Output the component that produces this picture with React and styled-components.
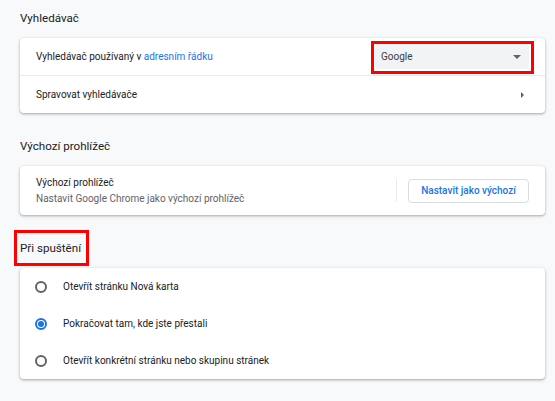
import React from 'react'
import styled, { createGlobalStyle } from 'styled-components'

const Global = createGlobalStyle`
  html, body {
    margin: 0;
    padding: 0;
    background: #f8f9fa;
  }
  body {
    font-family: Roboto, "Liberation Sans", sans-serif;
    color: #202124;
    -webkit-font-smoothing: antialiased;
  }
`

const App = () => {
  return (
    <>
      <Global />
      <S.Page>
        <S.Heading>Vyhledávač</S.Heading>
        <S.Card>
          <S.Row>
            <S.Label>
              Vyhledávač používaný v <S.Link>adresním řádku</S.Link>
            </S.Label>
            <S.Select>
              <span>Google</span>
              <S.DownArrow />
            </S.Select>
          </S.Row>
          <S.Row divided>
            <S.Label>Spravovat vyhledávače</S.Label>
            <S.RightArrow />
          </S.Row>
        </S.Card>

        <S.Heading>Výchozí prohlížeč</S.Heading>
        <S.Card>
          <S.TallRow>
            <S.TextBlock>
              <S.Label>Výchozí prohlížeč</S.Label>
              <S.Secondary>Nastavit Google Chrome jako výchozí prohlížeč</S.Secondary>
            </S.TextBlock>
            <S.Separator />
            <S.Button>Nastavit jako výchozí</S.Button>
          </S.TallRow>
        </S.Card>

        <S.Heading>
          <S.Marked>Při spuštění</S.Marked>
        </S.Heading>
        <S.Card>
          {[
            'Otevřít stránku Nová karta',
            'Pokračovat tam, kde jste přestali',
            'Otevřít konkrétní stránku nebo skupinu stránek'
          ].map((text, i) => (
            <S.RadioRow key={i}>
              <S.Radio checked={i === 1} />
              <S.Label>{text}</S.Label>
            </S.RadioRow>
          ))}
        </S.Card>
      </S.Page>
    </>
  )
}

const S = {
  Page: styled.main`
    padding: 8px 10px 20px 20px;
  `,
  Heading: styled.h2`
    margin: 0 0 10px;
    font-size: 11.6px;
    font-weight: 400;
    line-height: 20px;
    color: #202124;
    &:not(:first-child) {
      margin-top: 23px;
    }
  `,
  Marked: styled.span`
    position: relative;
    display: inline-block;
    &::after {
      content: '';
      position: absolute;
      left: -6px;
      right: -8px;
      top: -8px;
      bottom: -8px;
      border: 3px solid #ff0000;
    }
  `,
  Card: styled.section`
    background: #fff;
    border-radius: 4px;
    box-shadow: 0 1px 2px rgba(60, 64, 67, 0.3), 0 1px 3px 1px rgba(60, 64, 67, 0.12);
  `,
  Row: styled.div`
    display: flex;
    align-items: center;
    justify-content: space-between;
    height: 37px;
    padding: 0 16px;
    border-top: ${p => (p.divided ? '1px solid #e8eaed' : 'none')};
  `,
  TallRow: styled.div`
    display: flex;
    align-items: center;
    height: 49px;
    padding: 0 16px;
  `,
  RadioRow: styled.div`
    display: flex;
    align-items: center;
    height: 37px;
    padding: 0 15px;
    gap: 16px;
  `,
  TextBlock: styled.div`
    flex: 1;
    display: flex;
    flex-direction: column;
    line-height: 16px;
  `,
  Label: styled.span`
    font-size: 10px;
    color: #202124;
  `,
  Secondary: styled.span`
    font-size: 10px;
    color: #5f6368;
  `,
  Link: styled.a`
    color: #1a73e8;
    text-decoration: none;
  `,
  Select: styled.div`
    position: relative;
    display: flex;
    align-items: center;
    justify-content: space-between;
    width: 154px;
    height: 25px;
    box-sizing: border-box;
    padding: 0 8px 0 6px;
    background: #f1f3f4;
    border-radius: 4px;
    font-size: 10px;
    color: #3c4043;
    &::after {
      content: '';
      position: absolute;
      left: -4px;
      right: -5px;
      top: -3px;
      bottom: -5px;
      border: 3px solid #ff0000;
    }
  `,
  DownArrow: styled.i`
    width: 0;
    height: 0;
    border-left: 4px solid transparent;
    border-right: 4px solid transparent;
    border-top: 4px solid #5f6368;
  `,
  RightArrow: styled.i`
    width: 0;
    height: 0;
    margin-right: 5px;
    border-top: 3.5px solid transparent;
    border-bottom: 3.5px solid transparent;
    border-left: 3.5px solid #5f6368;
  `,
  Separator: styled.span`
    width: 1px;
    height: 23px;
    background: #e8eaed;
    margin-right: 11px;
  `,
  Button: styled.button`
    width: 121px;
    height: 24px;
    background: #fff;
    border: 1px solid #dadce0;
    border-radius: 4px;
    font-family: Roboto, "Liberation Sans", sans-serif;
    font-size: 10px;
    font-weight: 500;
    color: #1a73e8;
    padding: 0;
  `,
  Radio: styled.span`
    box-sizing: border-box;
    width: 12px;
    height: 12px;
    border-radius: 50%;
    border: 2px solid ${p => (p.checked ? '#1a73e8' : '#5f6368')};
    display: flex;
    align-items: center;
    justify-content: center;
    &::after {
      content: '';
      width: 6px;
      height: 6px;
      border-radius: 50%;
      background: ${p => (p.checked ? '#1a73e8' : 'transparent')};
    }
  `
}

export default App
